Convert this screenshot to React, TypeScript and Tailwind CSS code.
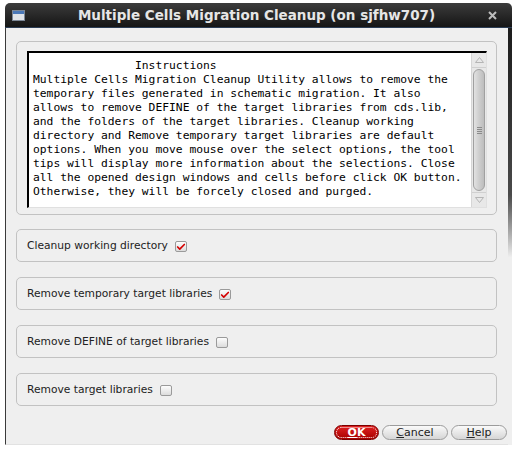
import { Check } from "lucide-react";

const lines = [
  "               Instructions",
  "Multiple Cells Migration Cleanup Utility allows to remove the",
  "temporary files generated in schematic migration. It also",
  "allows to remove DEFINE of the target libraries from cds.lib,",
  "and the folders of the target libraries. Cleanup working",
  "directory and Remove temporary target libraries are default",
  "options. When you move mouse over the select options, the tool",
  "tips will display more information about the selections. Close",
  "all the opened design windows and cells before click OK button.",
  "Otherwise, they will be forcely closed and purged.",
];

const options = [
  { label: "Cleanup working directory", checked: true },
  { label: "Remove temporary target libraries", checked: true },
  { label: "Remove DEFINE of target libraries", checked: false },
  { label: "Remove target libraries", checked: false },
];

function CheckBox({ checked }: { checked: boolean }) {
  return (
    <span className="w-[12px] h-[11px] border border-[#9a9a9a] rounded-[2px] bg-gradient-to-b from-[#fdfdfd] to-[#dcdcdc] flex items-center justify-center">
      {checked && <Check className="w-[10px] h-[10px] text-[#d40000]" strokeWidth={4} />}
    </span>
  );
}

function Scrollbar() {
  return (
    <div className="w-[15px] h-full flex flex-col bg-[#e8e8e8] border-l border-[#d6d6d6]">
      <div className="h-[15px] flex items-center justify-center border-b border-[#d0d0d0]">
        <svg width="9" height="6" viewBox="0 0 9 6">
          <path d="M0.5 5.5 L4.5 0.5 L8.5 5.5 Z" fill="none" stroke="#b5b5b5" />
        </svg>
      </div>
      <div className="flex-1 py-[1px] flex">
        <div className="flex-1 mx-[1px] rounded-[7px] border border-[#a0a0a0] bg-gradient-to-r from-[#e2e2e2] via-[#cecece] to-[#bdbdbd] flex flex-col items-center justify-center gap-[1px]">
          <div className="w-[5px] h-px bg-[#8a8a8a]" />
          <div className="w-[5px] h-px bg-[#8a8a8a]" />
          <div className="w-[5px] h-px bg-[#8a8a8a]" />
          <div className="w-[5px] h-px bg-[#8a8a8a]" />
        </div>
      </div>
      <div className="h-[15px] flex items-center justify-center border-t border-[#d0d0d0]">
        <svg width="9" height="6" viewBox="0 0 9 6">
          <path d="M0.5 0.5 L4.5 5.5 L8.5 0.5 Z" fill="none" stroke="#b5b5b5" />
        </svg>
      </div>
    </div>
  );
}

function Button({ label, ul, primary }: { label: string; ul: number; primary?: boolean }) {
  const base =
    "h-[15px] rounded-full flex items-center justify-center text-[11px] leading-none border";
  if (primary) {
    return (
      <button className={`${base} w-[45px] bg-gradient-to-b from-[#e02020] to-[#a80000] border-[#7a0000] p-[1px]`}>
        <span className="w-full h-full rounded-full border border-dotted border-white flex items-center justify-center text-white font-bold">
          <span className="underline underline-offset-1">O</span>K
        </span>
      </button>
    );
  }
  return (
    <button
      className={`${base} ${label === "Help" ? "w-[56px]" : "w-[66px]"} bg-gradient-to-b from-[#fafafa] to-[#d6d6d6] border-[#9c9c9c] text-[#222]`}
    >
      <span className="underline underline-offset-1">{label.slice(0, ul)}</span>
      {label.slice(ul)}
    </button>
  );
}

export default function App() {
  return (
    <div className="w-[518px] h-[457px] bg-white overflow-hidden" style={{ fontFamily: "'DejaVu Sans', sans-serif" }}>
      <div className="ml-[5px] mt-[3px] w-[507px] h-[442px] flex flex-col">
        {/* Title bar */}
        <div className="h-[25px] rounded-t-[5px] bg-gradient-to-b from-[#3c3c3c] to-[#161616] flex items-center px-[7px] border-b border-[#2b3d55]">
          <div className="w-[13px] h-[11px] border border-[#7c8796] bg-[#dfe3e8] flex flex-col">
            <div className="h-[3px] bg-[#4a78b8]" />
          </div>
          <div className="flex-1 text-center text-[#e6e6e6] font-bold text-[13.5px]">
            Multiple Cells Migration Cleanup (on sjfhw707)
          </div>
          <svg width="9" height="9" viewBox="0 0 9 9" className="mr-[8px]">
            <path d="M1 1 L8 8 M8 1 L1 8" stroke="#bdbdbd" strokeWidth="2" />
          </svg>
        </div>

        <div className="flex-1 flex">
          {/* Body */}
          <div className="flex-1 bg-[#efefef] border-l border-[#3a3a3a] border-b border-b-[#e2e2e2] pl-[10px] pr-[11px] pt-[13px] flex flex-col">
            <div className="h-[174px] border border-[#c2c2c2] rounded-[5px] pl-[10px] pr-[9px] pt-[9px]">
              <div className="h-[157px] bg-white border-t-2 border-l-2 border-black border-r border-b border-r-[#e0e0e0] border-b-[#e0e0e0] flex">
                <div
                  className="flex-1 min-w-0 overflow-hidden pl-[4px] pt-[6px] text-[11.3px] leading-[14px] text-black"
                  style={{ fontFamily: "'DejaVu Sans Mono', monospace" }}
                >
                  {lines.map((l, i) => (
                    <div key={i} className="whitespace-pre text-nowrap">
                      {l}
                    </div>
                  ))}
                </div>
                <Scrollbar />
              </div>
            </div>

            <div className="mt-[14px] flex flex-col gap-[15px]">
              {options.map((o) => (
                <div
                  key={o.label}
                  className="h-[33px] border border-[#c2c2c2] rounded-[5px] pl-[10px] pt-[2px] flex items-center gap-[7px] text-[10.7px] text-[#222]"
                >
                  <span>{o.label}</span>
                  <CheckBox checked={o.checked} />
                </div>
              ))}
            </div>

            <div className="mt-[19px] flex justify-end gap-[3px] -mr-[10px]">
              <Button label="OK" ul={1} primary />
              <Button label="Cancel" ul={1} />
              <Button label="Help" ul={1} />
            </div>
          </div>
          {/* right edge shadow */}
          <div className="w-[4px] bg-gradient-to-b from-[#1c1c1c] via-[#4a4a4a] via-40% to-[#efefef] to-55%" />
        </div>
      </div>
    </div>
  );
}
